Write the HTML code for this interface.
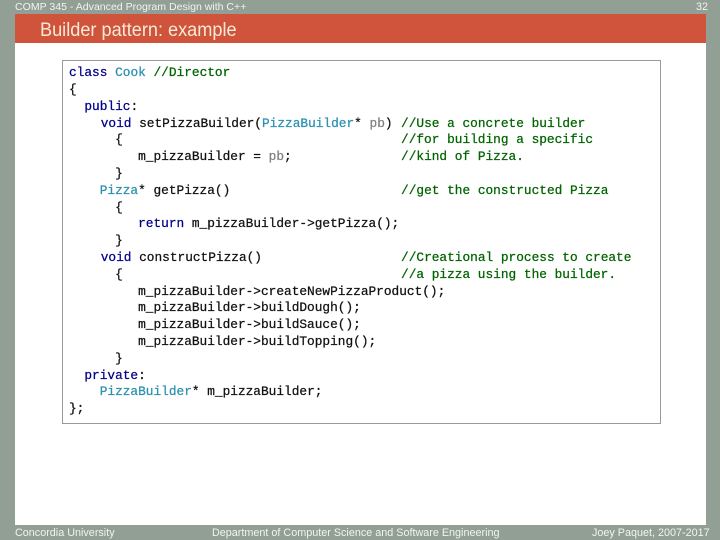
<!DOCTYPE html>
<html>
<head>
<meta charset="utf-8">
<style>
html,body{margin:0;padding:0;}
body{width:720px;height:540px;position:relative;overflow:hidden;background:#919f95;font-family:"Liberation Sans",sans-serif;}
.abs{position:absolute;white-space:nowrap;}
#white{left:15px;top:14px;width:691px;height:511px;background:#fff;}
#red{left:15px;top:14px;width:691px;height:29px;background:#cf543b;}
#title{left:40px;top:18px;font-size:19.5px;line-height:24px;color:#f7ead8;transform:scaleX(0.93);transform-origin:0 0;}
.sm{color:#f2f4f2;font-size:10.8px;line-height:12px;}
#box{left:62px;top:60px;width:597px;height:362px;border:1px solid #999;background:#fff;}
pre{position:absolute;left:69px;top:65.2px;margin:0;font-family:"Liberation Mono",monospace;font-size:12.8px;line-height:16.8px;color:#111;-webkit-text-stroke:0.25px currentColor;}
.k{color:#00008b;}.t{color:#2b91af;}.c{color:#006400;}.g{color:#808080;}
.cc{color:#006400;position:relative;left:1.8px;}
.v{position:relative;left:1px;}
</style>
</head>
<body>
<div class="abs" id="white"></div>
<div class="abs" id="red"></div>
<div class="abs sm" style="left:15px;top:1px;font-size:10.55px;">COMP 345 - Advanced Program Design with C++</div>
<div class="abs sm" style="left:696px;top:1px;">32</div>
<div class="abs" id="title">Builder pattern: example</div>
<div class="abs" id="box"></div>
<pre><span class="k">class</span> <span class="t">Cook</span> <span class="c">//Director</span>
{
  <span class="k">public</span>:
    <span class="v"><span class="k">void</span> setPizzaBuilder(<span class="t">PizzaBuilder</span>* <span class="g">pb</span>)</span> <span class="cc">//Use a concrete builder</span>
      {                                    <span class="cc">//for building a specific</span>
         m_pizzaBuilder = <span class="g">pb</span>;              <span class="cc">//kind of Pizza.</span>
      }
    <span class="t">Pizza</span>* getPizza()                      <span class="cc">//get the constructed Pizza</span>
      {
         <span class="k">return</span> m_pizzaBuilder-&gt;getPizza();
      }
    <span class="v"><span class="k">void</span> constructPizza()</span>                  <span class="cc">//Creational process to create</span>
      {                                    <span class="cc">//a pizza using the builder.</span>
         m_pizzaBuilder-&gt;createNewPizzaProduct();
         m_pizzaBuilder-&gt;buildDough();
         m_pizzaBuilder-&gt;buildSauce();
         m_pizzaBuilder-&gt;buildTopping();
      }
  <span class="k">private</span>:
    <span class="t">PizzaBuilder</span>* m_pizzaBuilder;
};</pre>
<div class="abs sm" style="left:15px;top:527px;">Concordia University</div>
<div class="abs sm" style="left:212px;top:527px;">Department of Computer Science and Software Engineering</div>
<div class="abs sm" style="left:592px;top:527px;">Joey Paquet, 2007-2017</div>
</body>
</html>
